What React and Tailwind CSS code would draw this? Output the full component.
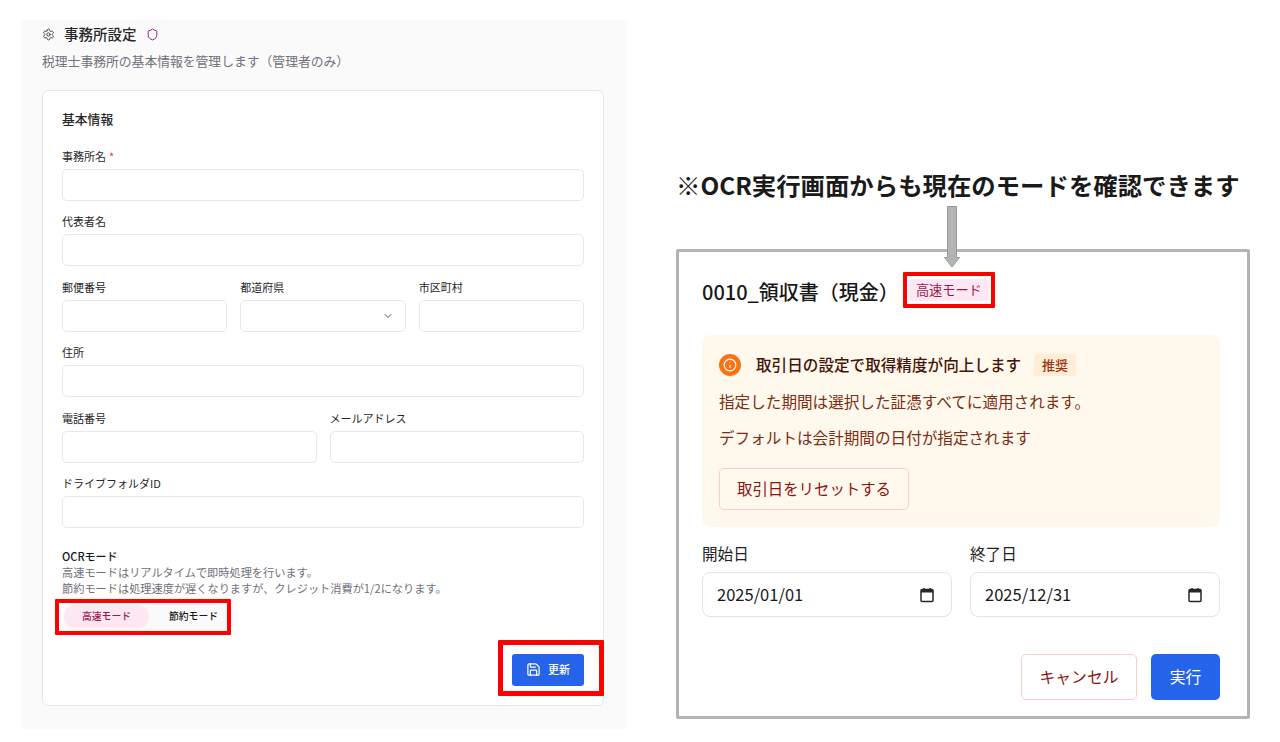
import { ChevronDown, Info, Save, Settings, Shield } from "lucide-react";

const Field = ({ label, required, children, className = "" }) => {
  return (
    <div className={`flex flex-col ${className}`}>
      <p className="h-[16px] text-[11px] leading-[16px] text-[#27272a]">
        {label}
        {required && <span className="ml-[3px] text-red-500">*</span>}
      </p>
      <div className="mt-[5px] flex h-[32px] items-center justify-between rounded-[5px] border border-[#e8e8ea] bg-white px-[11px]">
        {children}
      </div>
    </div>
  );
};

const DateField = ({ label, value }) => {
  return (
    <div className="flex-1">
      <p className="h-[24px] text-[15.6px] leading-[24px] text-[#1f1f22]">{label}</p>
      <div className="mt-[7px] flex h-[45px] items-center justify-between rounded-[8px] border border-[#e4e4e7] bg-white pl-[14px] pr-[17px] text-[16.5px] text-[#18181b]">
        <span>{value}</span>
        <svg width="14" height="16" viewBox="0 0 14 16" fill="none">
          <rect x="1" y="2.500" width="12" height="12" rx="1" stroke="#27272a" strokeWidth="1.5" />
          <rect x="1" y="2.500" width="12" height="3" fill="#27272a" />
          <path d="M4 1v2M10 1v2" stroke="#27272a" strokeWidth="1.5" />
        </svg>
      </div>
    </div>
  );
};

const OfficeSettings = () => {
  return (
    <div className="h-[709px] w-[605px] bg-[#fafafa] pl-[20px] pt-[5px]">
      <div className="flex h-[18px] items-center">
        <Settings size={13} strokeWidth={1.5} className="text-[#27272a]" />
        <h1 className="ml-[9px] text-[14.5px] font-medium leading-[18px] text-[#27272a]">事務所設定</h1>
        <Shield size={13} strokeWidth={1.75} className="ml-[9px] text-[#86198f]" />
      </div>
      <p className="mt-[9px] text-[12.8px] leading-[18px] text-[#71717a]">
        税理士事務所の基本情報を管理します（管理者のみ）
      </p>

      <div className="mt-[20px] h-[616px] w-[562px] rounded-[6px] border border-[#e7e7e9] bg-white px-[19px] pt-[19px]">
        <h2 className="text-[12.8px] font-medium leading-[18px] text-[#27272a]">基本情報</h2>

        <div className="mt-[19.5px] flex flex-col gap-[12.5px]">
          <Field label="事務所名" required />
          <Field label="代表者名" />
          <div className="flex gap-[13px]">
            <Field label="郵便番号" className="flex-1" />
            <Field label="都道府県" className="flex-1">
              <span />
              <ChevronDown size={12} className="text-[#52525b]" />
            </Field>
            <Field label="市区町村" className="flex-1" />
          </div>
          <Field label="住所" />
          <div className="flex gap-[13px]">
            <Field label="電話番号" className="flex-1" />
            <Field label="メールアドレス" className="flex-1" />
          </div>
          <Field label="ドライブフォルダID" />
        </div>

        <div className="mt-[19.5px]">
          <p className="text-[11px] font-medium leading-[16px] text-[#18181b]">OCRモード</p>
          <p className="text-[11.2px] leading-[16.5px] text-[#71717a]">高速モードはリアルタイムで即時処理を行います。</p>
          <p className="text-[11.2px] leading-[16.5px] text-[#71717a]">
            節約モードは処理速度が遅くなりますが、クレジット消費が1/2になります。
          </p>

          <div className="relative mt-[5px] flex h-[30px] w-[176px] items-center rounded-full bg-[#fafafa] pl-[2px] text-[9.8px] font-medium">
            <span className="flex h-[23px] w-[85px] items-center justify-center rounded-full bg-[#fce7f3] text-[#9d174d]">
              高速モード
            </span>
            <span className="flex w-[89px] items-center justify-center text-[#18181b]">節約モード</span>
            <div className="absolute -left-[7px] -top-[3px] h-[36px] w-[176px] rounded-[1px] border-[4px] border-[#ff0000]" />
          </div>
        </div>

        <div className="mt-[22px] flex justify-end">
          <button className="relative flex h-[32px] w-[72px] items-center justify-center gap-[7px] rounded-[3px] bg-[#2563eb] text-[11px] font-medium text-white">
            <Save size={15} />
            更新
            <span className="absolute -left-[14px] -top-[14px] h-[56px] w-[106px] rounded-[1px] border-[5px] border-[#ff0000]" />
          </button>
        </div>
      </div>
    </div>
  );
};

const OcrDialog = () => {
  return (
    <div className="relative h-[470px] w-[574px] rounded-[2px] border-[3px] border-[#b3b3b3] bg-white pl-[23px] pr-[27px] pt-[20px]">
      <svg
        className="absolute -top-[46px] left-[265px]"
        width="16"
        height="62"
        viewBox="0 0 16 62"
      >
        <path d="M3.500 0.500h9v51h3L8 61 0.500 51.500h3z" fill="#b3b3b3" stroke="#9a9a9a" />
      </svg>

      <div className="flex h-[36px] items-center">
        <h2 className="pt-[4px] text-[20px] font-medium text-[#18181b]">0010_領収書（現金）</h2>
        <div className="ml-[4px] flex h-[36px] w-[92px] items-center justify-center rounded-[1px] border-[4px] border-[#ff0000] bg-white">
          <span className="flex h-[22px] w-[80px] items-center justify-center rounded-[3px] bg-[#fce7f3] text-[13.2px] text-[#9d174d]">
            高速モード
          </span>
        </div>
      </div>

      <div className="mt-[27px] h-[192px] rounded-[8px] bg-[#fff8ed] px-[17px] pt-[18px]">
        <div className="flex h-[24px] items-center">
          <span className="flex h-[22px] w-[22px] items-center justify-center rounded-full bg-[#f97316]">
            <Info size={14} className="text-white" />
          </span>
          <p className="ml-[15px] text-[15.6px] font-medium text-[#431407]">取引日の設定で取得精度が向上します</p>
          <span className="ml-[13px] flex h-[22px] w-[42px] items-center justify-center rounded-[3px] bg-[#ffedd5] text-[13px] font-medium text-[#9a3412]">
            推奨
          </span>
        </div>
        <p className="mt-[12px] text-[15.6px] leading-[24px] text-[#7c2d12]">
          指定した期間は選択した証憑すべてに適用されます。
        </p>
        <p className="mt-[12px] text-[15.6px] leading-[24px] text-[#7c2d12]">
          デフォルトは会計期間の日付が指定されます
        </p>
        <button className="mt-[19px] h-[42px] w-[190px] rounded-[5px] border border-[#fecaca] bg-[#fff8ed] text-[15.4px] text-[#8f1212]">
          取引日をリセットする
        </button>
      </div>

      <div className="mt-[14px] flex gap-[18px]">
        <DateField label="開始日" value="2025/01/01" />
        <DateField label="終了日" value="2025/12/31" />
      </div>

      <div className="mt-[37px] flex justify-end gap-[14px]">
        <button className="h-[46px] w-[116px] rounded-[5px] border border-[#fecaca] bg-white text-[15.8px] text-[#8f1212]">
          キャンセル
        </button>
        <button className="h-[46px] w-[69px] rounded-[5px] bg-[#2563eb] text-[15.8px] text-white">
          実行
        </button>
      </div>
    </div>
  );
};

const App = () => {
  return (
    <div className="flex h-[742px] w-[1280px] overflow-hidden bg-white pl-[22px] pt-[20px] font-['Noto_Sans_CJK_JP','Noto_Sans',sans-serif]">
      <OfficeSettings />
      <div className="ml-[49px] pt-[148px]">
        <p className="h-[34px] text-[24.4px] font-bold leading-[34px] text-[#1a1a1a] whitespace-nowrap">
          ※OCR実行画面からも現在のモードを確認できます
        </p>
        <div className="mt-[47px]">
          <OcrDialog />
        </div>
      </div>
    </div>
  );
};

export default App;
